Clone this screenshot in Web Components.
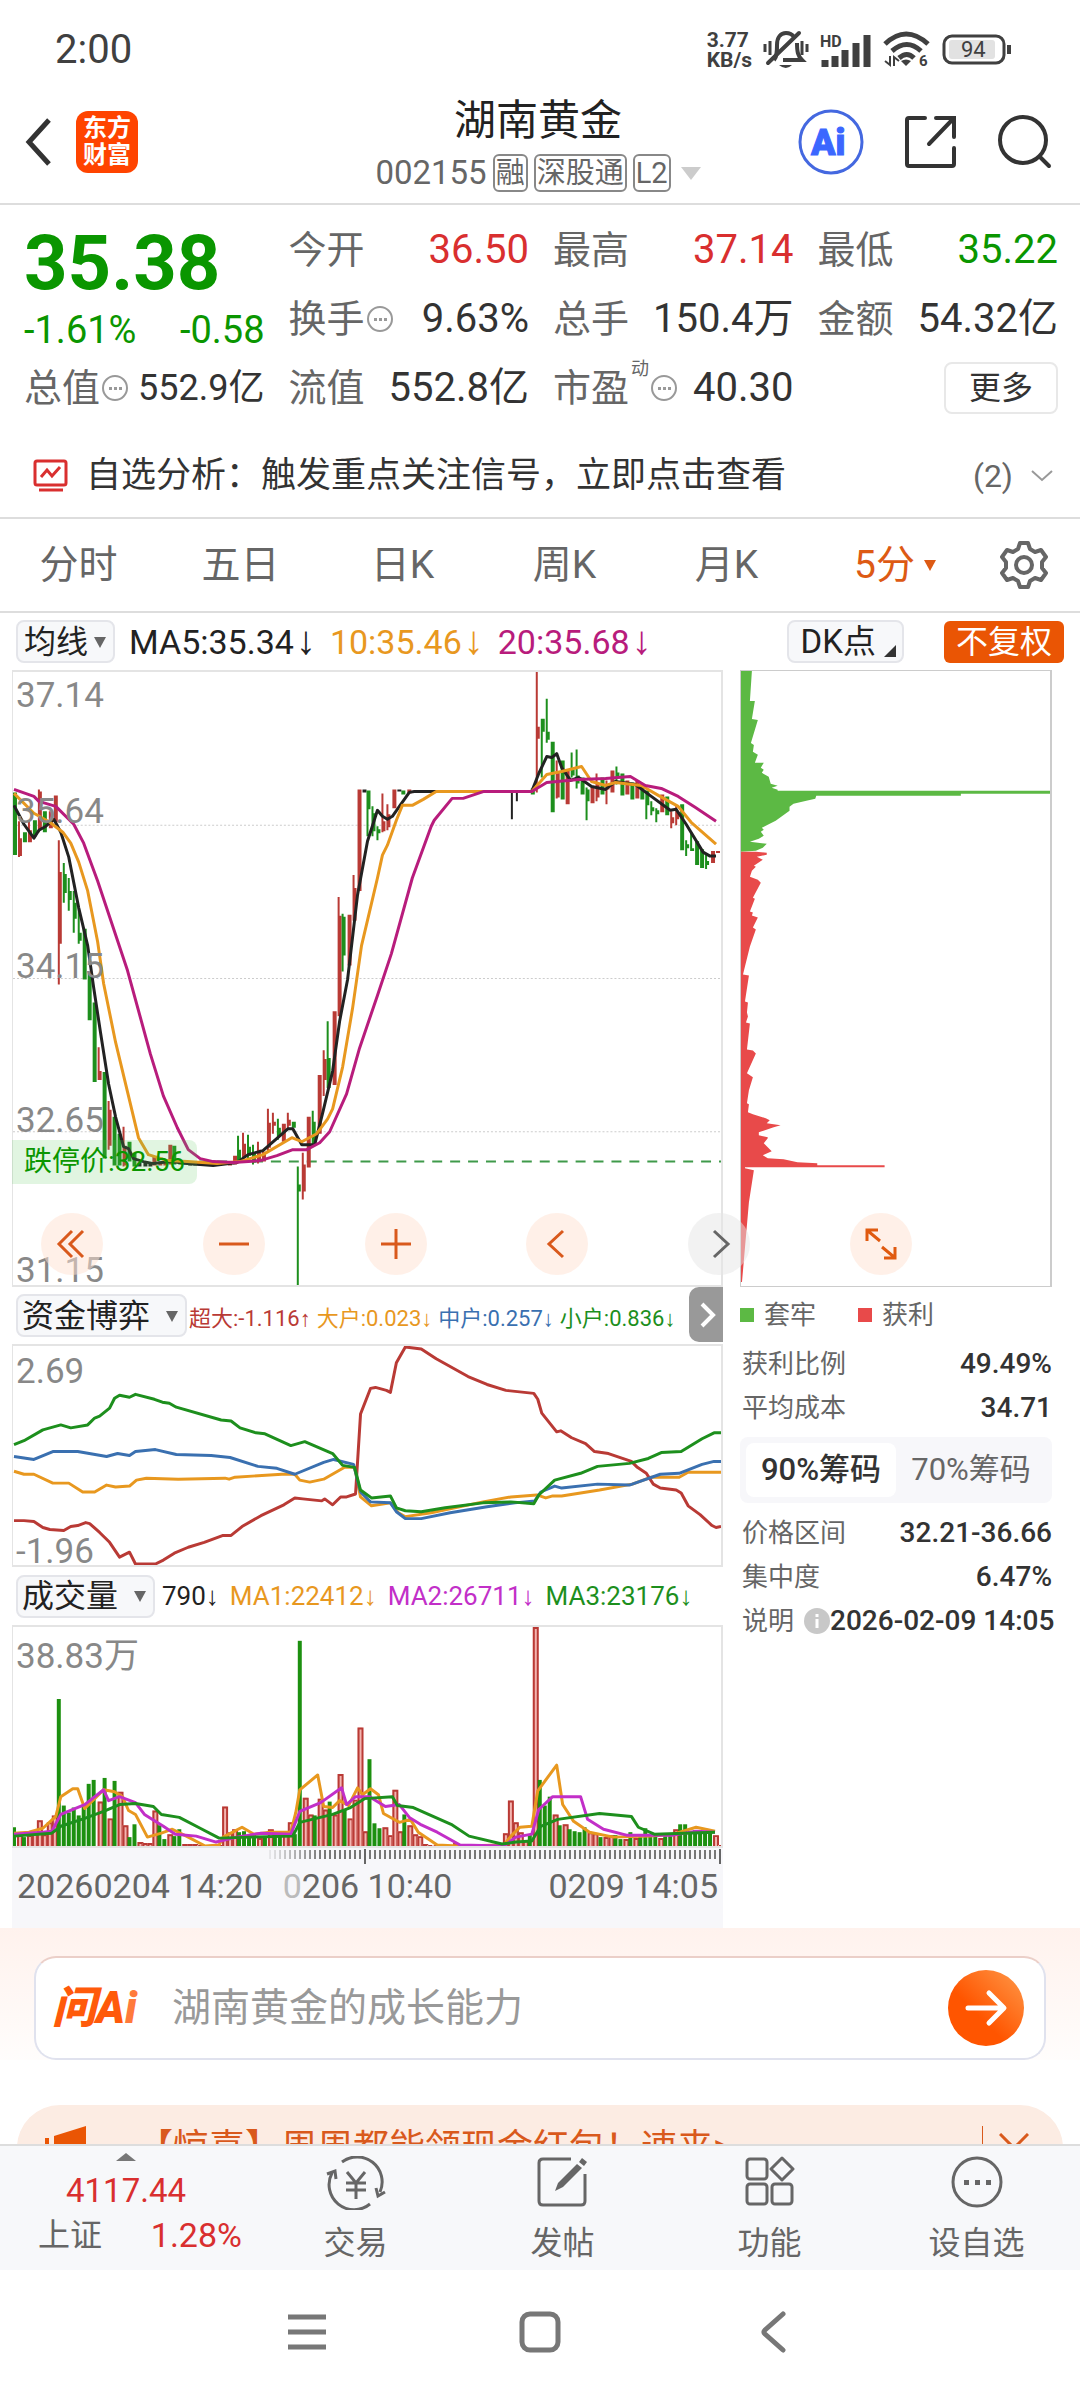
<!DOCTYPE html>
<html lang="zh-CN">
<head>
<meta charset="utf-8">
<meta name="viewport" content="width=device-width, initial-scale=1">
<title>湖南黄金 002155</title>
<style>
    body {
        margin: 0;
        background: #fff;
        color: #333;
        font-family: Roboto, "Noto Sans CJK SC", sans-serif;
    }
</style>
</head>
<body>
<stock-page></stock-page>

<script>
// shared rules, put at the top of every shadow root
const BASE = `
    * { box-sizing: border-box; }
    button, select, input { font: inherit; color: inherit; border: 0; padding: 0; margin: 0; background: none; border-radius: 0; }
    a { color: inherit; text-decoration: none; }
    svg { display: block; }
    .red { color: #d92f2f; }
    .green { color: #0a9600; }
`;

const ICONS = {
    back: [28, 50, '<path d="M25 3 5 25l20 22" stroke="#333" stroke-width="5"/>'],
    ai: [66, 66, '<circle cx="33" cy="33" r="31" stroke="#4468e0" stroke-width="3"/><text x="13" y="46" font-size="36" font-weight="900" fill="#3b67ff" stroke="#3b67ff">Ai</text>'],
    share: [54, 54, '<path d="M21 3H5q-2 0-2 2v44q0 2 2 2h43q2 0 2-2V33M32 3h18v19M49 4 25 29" stroke="#333" stroke-width="4" stroke-linecap="round"/>'],
    search: [54, 54, '<circle cx="25" cy="25" r="23" stroke="#333" stroke-width="4"/><path d="m42 42 9 9" stroke="#333" stroke-width="4" stroke-linecap="round"/>'],
    mute: [46, 40, '<path d="M11 30c3-3 3-8 3-15C14 7 18 3 23 3c3 0 6 1 8 4M34 13c0 9 1 13 5 17H20" stroke="#404040" stroke-width="4"/><path d="M5 33 36 3" stroke="#404040" stroke-width="4" stroke-linecap="round"/><path d="M16 35h13q-6 6-13 0z" fill="#404040"/><path d="M2 14v8m5-11v14m32-14v14m5-11v8" stroke="#404040" stroke-width="3"/>'],
    signal: [52, 38, '<text x="0" y="16" font-size="16" font-weight="700" fill="#404040">HD</text><path d="M5 36v-7m10 7V25m10 11V19m11 17V12m11 24V4" stroke="#404040" stroke-width="7"/>'],
    wifi: [48, 40, '<path d="M2 14q21-20 43 0M9 21q15-13 29 0M16 28q8-7 15 0" stroke="#404040" stroke-width="5"/><path d="m18 31 5 5 5-5q-5-3-10 0z" fill="#404040"/><path d="M7 26v9l-5-4m9 5v-9l5 4" stroke="#404040" stroke-width="2"/><text x="36" y="36" font-size="15" font-weight="700" fill="#404040">6</text>'],
    battery: [70, 32, '<rect x="2" y="2" width="60" height="27" rx="8" stroke="#404040" stroke-width="3"/><rect x="7" y="6" width="46" height="19" rx="3" fill="#e2e2e2"/><path d="M67 11v9" stroke="#404040" stroke-width="4"/><text x="19" y="23" font-size="22" fill="#404040">94</text>'],
    more: [26, 26, '<circle cx="13" cy="13" r="12" stroke="#999" stroke-width="2"/><path d="M7 12h3v3H7zm5 0h3v3h-3zm5 0h3v3h-3z" fill="#999"/>'],
    signalboard: [36, 34, '<rect x="2" y="2" width="31" height="24" rx="2" stroke="#d92f2f" stroke-width="3"/><path d="m8 18 6-7 5 6 8-9" stroke="#d92f2f" stroke-width="3"/><path d="M6 31h24" stroke="#d92f2f" stroke-width="3"/>'],
    chevron: [24, 14, '<path d="m2 2 10 9L22 2" stroke="#999" stroke-width="2"/>'],
    gear: [50, 50, '<path d="M21 3h8l2 6 5 3 6-2 5 7-4 5v6l4 5-5 7-6-2-5 3-2 6h-8l-2-6-5-3-6 2-5-7 4-5v-6l-4-5 5-7 6 2 5-3z" stroke="#666" stroke-width="4" stroke-linejoin="round"/><circle cx="25" cy="25" r="8" stroke="#666" stroke-width="4"/>'],
    first: [32, 32, '<path d="M16 3 3 16l13 13M27 3 14 16l13 13" stroke="#d9591c" stroke-width="3"/>'],
    minus: [32, 32, '<path d="M1 16h30" stroke="#d9591c" stroke-width="3"/>'],
    plus: [32, 32, '<path d="M1 16h30M16 1v30" stroke="#d9591c" stroke-width="3"/>'],
    prev: [32, 32, '<path d="M22 3 8 16l14 13" stroke="#d9591c" stroke-width="3"/>'],
    next: [32, 32, '<path d="m11 3 14 13-14 13" stroke="#666" stroke-width="3"/>'],
    expand: [32, 32, '<path d="M13 2H2v11M3 3l12 10M19 30h11V19M29 29 17 19" stroke="#e05a10" stroke-width="3"/>'],
    go: [76, 76, '<defs><linearGradient id="g" x1="0" y1="1" x2="1" y2="0"><stop offset=".4" stop-color="#ff5500"/><stop offset="1" stop-color="#ff9a4a"/></linearGradient></defs><circle cx="38" cy="38" r="38" fill="url(#g)"/><path d="M20 38h35M41 23l15 15-15 15" stroke="#fff" stroke-width="5" stroke-linecap="round" stroke-linejoin="round"/>'],
    horn: [42, 44, '<path d="M0 12h4v22H0zM9 10 41 0v44L9 34z" fill="#ea5504"/>'],
    close: [30, 30, '<path d="m1 1 28 28M29 1 1 29" stroke="#d9591c" stroke-width="3"/>'],
    trade: [60, 54, '<path d="M16 6A25 25 0 0 1 54 36M44 48A25 25 0 0 1 6 17M1 18l8-3 1 8M59 36l-7 4-2-8" stroke="#666" stroke-width="3"/><path d="m21 16 9 11 9-11M30 27v16M20 27h20M20 34h20" stroke="#666" stroke-width="3"/>'],
    post: [52, 52, '<path d="M34 3H6q-4 0-4 4v38q0 4 4 4h38q4 0 4-4V18" stroke="#666" stroke-width="3"/><path d="m18 35 3-8L40 8l5 4-19 19zM42 6l3-4 5 4-3 4z" fill="#666"/>'],
    grid: [50, 50, '<rect x="2" y="3" width="20" height="20" rx="3" stroke="#666" stroke-width="3"/><rect x="2" y="28" width="20" height="20" rx="3" stroke="#666" stroke-width="3"/><rect x="27" y="28" width="20" height="20" rx="3" stroke="#666" stroke-width="3"/><path d="m37 2 11 11-11 11-11-11z" stroke="#666" stroke-width="3" stroke-linejoin="round"/>'],
    dots: [52, 52, '<circle cx="26" cy="26" r="24" stroke="#666" stroke-width="3"/><path d="M13 24h5v5h-5zm11 0h5v5h-5zm11 0h5v5h-5z" fill="#666"/>'],
    menu: [40, 40, '<path d="M1 5h38M1 20h38M1 35h38" stroke="#777" stroke-width="5"/>'],
    home: [42, 42, '<rect x="3" y="3" width="36" height="36" rx="8" stroke="#777" stroke-width="5"/>'],
    sysback: [28, 42, '<path d="M24 3 6 19q-2 2 0 4l18 16" stroke="#777" stroke-width="5" stroke-linecap="round"/>'],
    info: [26, 26, '<circle cx="13" cy="13" r="13" fill="#c8c8c8"/><path d="M13 11v9M13 6v3" stroke="#fff" stroke-width="3"/>'],
    down: [14, 14, '<path d="M1 2h12L7 13z" fill="currentColor"/>'],
    up: [20, 8, '<path d="M10 0 0 8h20z" fill="#777"/>'],
    corner: [12, 12, '<path d="M12 0v12H0z" fill="#333"/>'],
    right: [18, 28, '<path d="m3 3 11 11L3 25" stroke="#fff" stroke-width="4"/>']
};

class StockIcon extends HTMLElement {
    constructor() {
        super();
        this.attachShadow({ mode: 'open' });
    }

    connectedCallback() {
        const [w, h, body] = ICONS[this.getAttribute('name')];
        this.shadowRoot.innerHTML = `
            <style>:host { display: block; flex: none; } svg { display: block; }</style>
            <svg width="${w}" height="${h}" viewBox="0 0 ${w} ${h}" fill="none" aria-hidden="true">${body}</svg>
        `;
    }
}

class StatusBar extends HTMLElement {
    constructor() {
        super();
        this.attachShadow({ mode: 'open' });
    }

    connectedCallback() {
        this.shadowRoot.innerHTML = `
            <style>
                ${BASE}
                :host { display: flex; align-items: center; height: 88px; padding: 12px 68px 0 55px; color: #404040; gap: 11px; }
                .time { font-size: 40px; line-height: 48px; margin-right: auto; }
                .speed { display: flex; flex-direction: column; font-size: 21px; line-height: 20px; font-weight: 700; }
            </style>
            <span class="time">2:00</span>
            <span class="speed"><span>3.77</span><span>KB/s</span></span>
            <stock-icon name="mute"></stock-icon>
            <stock-icon name="signal"></stock-icon>
            <stock-icon name="wifi"></stock-icon>
            <stock-icon name="battery"></stock-icon>
        `;
    }
}

class StockHeader extends HTMLElement {
    constructor() {
        super();
        this.attachShadow({ mode: 'open' });
    }

    connectedCallback() {
        this.shadowRoot.innerHTML = `
            <style>
                ${BASE}
                :host { display: grid; grid-template-columns: 1fr auto 1fr; align-items: center; height: 117px; padding: 0 28px 7px 24px; border-bottom: 2px solid #ddd; }
                .side { display: flex; align-items: center; gap: 24px; }
                .side.end { justify-content: flex-end; gap: 40px; }
                .logo { width: 62px; height: 62px; border-radius: 12px; background: #ff4400; color: #fff; font-size: 24px; line-height: 27px; font-weight: 700; text-align: center; padding-top: 4px; }
                h1 { margin: 4px 0 0; font-size: 42px; line-height: 50px; font-weight: 400; text-align: center; color: #222; }
                .sub { display: flex; align-items: center; justify-content: center; gap: 6px; margin-top: 8px; font-size: 33px; line-height: 38px; color: #666; }
                .tag { border: 2px solid #888; border-radius: 6px; font-size: 29px; line-height: 34px; padding: 0 1px; }
                .tri { margin-left: 4px; border: 10px solid transparent; border-top: 13px solid #ccc; border-bottom: 0; }
            </style>
            <div class="side">
                <button aria-label="返回"><stock-icon name="back"></stock-icon></button>
                <div class="logo">东方<br>财富</div>
            </div>
            <div>
                <h1>${this.getAttribute('name')}</h1>
                <div class="sub">${this.getAttribute('code')}
                    <span class="tag">融</span><span class="tag">深股通</span><span class="tag">L2</span><i class="tri"></i>
                </div>
            </div>
            <div class="side end">
                <button aria-label="智能助手"><stock-icon name="ai"></stock-icon></button>
                <button aria-label="分享"><stock-icon name="share"></stock-icon></button>
                <button aria-label="搜索"><stock-icon name="search"></stock-icon></button>
            </div>
        `;
    }
}

// one label and its value; attributes: label, value, tone, info, sup
class QuoteCell extends HTMLElement {
    constructor() {
        super();
        this.attachShadow({ mode: 'open' });
    }

    connectedCallback() {
        const sup = this.getAttribute('sup');
        this.shadowRoot.innerHTML = `
            <style>
                ${BASE}
                :host { display: flex; align-items: center; justify-content: space-between; white-space: nowrap; font-size: 40px; line-height: 48px; }
                .label { display: flex; align-items: center; gap: 2px; color: #666; font-size: 38px; }
                sup { align-self: flex-start; font-size: 18px; line-height: 18px; margin-top: -4px; }
                .tight { font-size: 36px; }
            </style>
            <span class="label">${this.getAttribute('label')}${sup ? `<sup>${sup}</sup>` : ''}${this.hasAttribute('info') ? '<stock-icon name="more"></stock-icon>' : ''}</span>
            <span class="${this.getAttribute('tone') || ''}">${this.getAttribute('value')}</span>
        `;
    }
}

class QuotePanel extends HTMLElement {
    constructor() {
        super();
        this.attachShadow({ mode: 'open' });
    }

    connectedCallback() {
        this.shadowRoot.innerHTML = `
            <style>
                ${BASE}
                :host { display: grid; grid-template-columns: repeat(4, minmax(0, 1fr)); grid-auto-rows: 69px; column-gap: 24px; padding: 10px 22px 0 24px; }
                .main { grid-row: span 2; padding-top: 8px; }
                .price { font-size: 76px; line-height: 80px; font-weight: 700; }
                .change { display: flex; justify-content: space-between; font-size: 38px; line-height: 54px; }
                .more { justify-self: end; align-self: center; width: 114px; height: 52px; border: 2px solid #e8e8e8; border-radius: 8px; font-size: 32px; line-height: 40px; }
            </style>
            <div class="main green">
                <div class="price">35.38</div>
                <div class="change"><span>-1.61%</span><span>-0.58</span></div>
            </div>
            <quote-cell label="今开" value="36.50" tone="red"></quote-cell>
            <quote-cell label="最高" value="37.14" tone="red"></quote-cell>
            <quote-cell label="最低" value="35.22" tone="green"></quote-cell>
            <quote-cell label="换手" value="9.63%" info></quote-cell>
            <quote-cell label="总手" value="150.4万"></quote-cell>
            <quote-cell label="金额" value="54.32亿"></quote-cell>
            <quote-cell label="总值" value="552.9亿" tone="tight" info></quote-cell>
            <quote-cell label="流值" value="552.8亿"></quote-cell>
            <quote-cell label="市盈" value="40.30" sup="动" info></quote-cell>
            <button class="more">更多</button>
        `;
    }
}

class NoticeBar extends HTMLElement {
    constructor() {
        super();
        this.attachShadow({ mode: 'open' });
    }

    connectedCallback() {
        this.shadowRoot.innerHTML = `
            <style>
                ${BASE}
                :host { display: block; border-bottom: 2px solid #ddd; }
                a { display: flex; align-items: center; height: 95px; padding: 12px 26px 0 33px; gap: 17px; font-size: 35px; line-height: 44px; }
                .count { margin-left: auto; font-size: 32px; color: #666; }
            </style>
            <a href="#signals">
                <stock-icon name="signalboard"></stock-icon>
                <slot></slot>
                <span class="count">(2)</span>
                <stock-icon name="chevron"></stock-icon>
            </a>
        `;
    }
}

class PeriodTabs extends HTMLElement {
    constructor() {
        super();
        this.attachShadow({ mode: 'open' });
    }

    connectedCallback() {
        const tabs = ['分时', '五日', '日K', '周K', '月K'];
        this.shadowRoot.innerHTML = `
            <style>
                ${BASE}
                :host { display: flex; align-items: center; height: 94px; border-bottom: 2px solid #ddd; font-size: 39px; line-height: 48px; color: #666; }
                button { flex: 0 0 15%; display: flex; align-items: center; justify-content: center; gap: 8px; padding-right: 5px; }
                .on { color: #dd5a14; padding-left: 14px; }
                .set { flex: 1; }
            </style>
            ${tabs.map(t => `<button>${t}</button>`).join('')}
            <button class="on">5分<stock-icon name="down"></stock-icon></button>
            <button class="set" aria-label="设置"><stock-icon name="gear"></stock-icon></button>
        `;
    }
}

// drop-down that picks the indicator of a chart
class IndicatorSelect extends HTMLElement {
    constructor() {
        super();
        this.attachShadow({ mode: 'open' });
    }

    connectedCallback() {
        const value = this.getAttribute('value');
        this.shadowRoot.innerHTML = `
            <style>
                ${BASE}
                :host { display: flex; flex: none; align-items: center; gap: 4px; height: 43px; padding: 0 6px; border: 2px solid #e4e5ea; border-radius: 8px; background: #f7f8fa; color: #666; font-size: 32px; }
                :host([wide]) { gap: 14px; padding: 0 6px 0 4px; }
                select { appearance: none; line-height: 38px; height: 38px; color: #222; }
            </style>
            <select aria-label="指标"><option>${value}</option></select>
            <stock-icon name="down"></stock-icon>
        `;
    }
}

class MaRow extends HTMLElement {
    constructor() {
        super();
        this.attachShadow({ mode: 'open' });
    }

    connectedCallback() {
        this.shadowRoot.innerHTML = `
            <style>
                ${BASE}
                :host { display: flex; align-items: center; height: 57px; padding: 0 16px; gap: 12px; font-size: 34px; line-height: 42px; color: #222; white-space: nowrap; }
                indicator-select { margin-right: 2px; }
                b { display: inline-block; width: 24px; text-align: center; font: 40px/40px "Liberation Sans", sans-serif; }
                .ma10 { color: #e8981f; }
                .ma20 { color: #b81c7c; }
                .dk { margin-left: auto; height: 43px; display: flex; align-items: center; gap: 8px; padding: 0 6px 0 12px; border: 2px solid #e4e5ea; border-radius: 8px; background: #f7f8fa; font-size: 33px; line-height: 38px; }
                .dk stock-icon { align-self: flex-end; padding-bottom: 4px; }
                .fq { height: 42px; margin-left: 28px; padding: 0 12px; border-radius: 6px; background: #ea5504; color: #fff; font-size: 32px; line-height: 40px; }
            </style>
            <indicator-select value="均线"></indicator-select>
            <span>MA5:35.34<b>↓</b></span>
            <span class="ma10">10:35.46<b>↓</b></span>
            <span class="ma20">20:35.68<b>↓</b></span>
            <button class="dk">DK点<stock-icon name="corner"></stock-icon></button>
            <button class="fq">不复权</button>
        `;
    }
}

const STEP = 5.03;
const RED = '#b93a35';
const GREEN = '#1d8f1d';

// x, high, low, r/g/k, and the body's top and bottom when a wick shows
const CANDLES = [
    [1,121,184,'g'],[6,150,186,'r',167,185],[11,161,171,'g'],[16,149,171,'r',159,171],[21,149,165,'g'],[26,118,161,'r',120,158],
    [31,140,161,'g'],[37,140,157,'r'],[42,124,151,'r'],[46,169,314,'r',201,273],[51,192,232,'g',203,222],[56,207,240,'g',220,229],
    [61,220,262,'g',232,248],[66,237,273,'g',262,270],[71,258,309,'g'],[76,303,350,'g'],[81,332,412,'g'],[86,377,410,'r',401,410],
    [91,402,489,'g'],[96,431,480,'r',440,476],[101,447,496,'g'],[106,464,496,'g'],[111,457,497,'r',476,496],[116,472,492,'g'],
    [121,483,497,'g'],[126,493,497,'k'],[132,493,497,'k'],[137,494,497,'k'],[141,487,496,'r'],[147,492,496,'r'],[152,492,496,'r'],
    [157,475,495,'r'],[161,476,495,'g'],[167,492,495,'g'],[172,492,495,'k'],[177,493,496,'k'],[182,493,496,'k'],[187,493,496,'k'],
    [217,492,496,'r'],[222,486,495,'r'],[226,466,492,'g',480,490],[231,463,490,'r',474,488],[236,465,489,'g',477,486],
    [241,475,495,'g',484,493],[246,472,494,'r',480,492],[251,482,492,'r'],[256,439,483,'r',453,478],[261,443,464,'r',452,456],
    [266,449,470,'g',458,466],[271,454,472,'r'],[276,443,460,'r',450,456],[281,452,458,'g'],[286,497,616,'g',515,522],
    [291,483,530,'r',495,522],[296,447,498,'r'],[301,441,477,'g',452,474],[307,405,464,'r'],[312,380,426,'r',389,410],
    [316,351,418,'g',388,418],[322,341,415,'r'],[327,226,346,'r',245,346],[331,243,301,'g',246,285],[337,244,295,'r'],
    [342,204,250,'r',217,250],[347,118,220,'r'],[352,118,121,'k'],[356,119,165,'g',119,138],[361,135,165,'g',142,160],
    [366,155,169,'g',158,162],[371,122,161,'r',150,160],[376,133,159,'r',143,156],[382,118,137,'r'],[387,118,120,'k'],[391,119,123,'g'],
    [397,118,122,'r'],[501,119,148,'k',119,121],[506,119,130,'k',119,121],[521,117,123,'g'],[526,0,121,'r',55,67],
    [531,47,106,'g',47,60],[536,27,71,'g',60,68],[541,70,141,'g'],[546,89,127,'r',100,126],[551,89,128,'g'],[556,98,133,'r'],
    [561,81,106,'g',98,104],[566,78,117,'g',104,112],[571,106,123,'g'],[576,116,149,'g',118,130],[581,116,132,'r'],[586,102,130,'r',112,126],
    [591,106,123,'g'],[596,109,133,'r',114,118],[601,99,121,'r'],[606,95,113,'g',101,106],[611,102,124,'g'],[616,109,123,'r'],
    [621,111,128,'g'],[626,109,127,'r'],[631,115,128,'g'],[636,119,148,'g',119,134],[641,130,144,'g',136,140],[646,137,151,'g',139,143],
    [651,123,141,'r'],[656,125,144,'g'],[661,140,157,'r',146,152],[666,134,154,'r',141,148],[671,133,179,'g'],[676,169,185,'g',173,177],
    [681,161,180,'g',177,180],[686,170,194,'g'],[691,178,197,'g'],[696,184,198,'g',190,194],[702,180,192,'r'],[707,180,182,'r']
];

// r/g and the height of each volume bar
const VOLUMES = ('g19 r14 g9 r11 r14 r26 r12 r24 r31 g149 g41 g34 g39 g31 g42 g63 g67 r45 g69 r28 g66 r55 r21 g9 g22 r4 r3 r3 r36 g21 ' +
    'g7 r12 g10 g17 r2 r2 r2 r1 r1 r1 r1 r1 r40 r14 r17 g14 g15 g11 g12 r8 g10 r17 g12 g13 r12 r24 g12 g208 r49 r32 ' +
    'g31 r48 r37 g45 r32 r73 g37 r28 r47 r120 r15 g88 g23 g18 r19 r11 r57 r15 g32 r21 r12 r10 r2 r1 r1 r1 r1 r1 r3 r1 ' +
    'r1 r1 r1 r1 r1 r1 r1 r1 r13 r46 r24 r14 r6 g12 r222 g67 g41 g50 r32 g21 r22 g17 g15 g14 g19 r14 r13 g9 r9 r11 ' +
    'g11 g7 r7 g14 r8 g12 g18 g12 g11 r8 g10 g10 r17 g22 g22 g15 g16 g14 g14 g15 r11 r1').split(' ');

const LINES = {
    price: [
        ['#222', '1,134 11,153 21,167 26,159 33,155 41,148 48,161 56,186 66,237 75,275 81,317 88,363 96,414 103,447 111,477 116,479 121,489 131,492 141,494 158,492 175,494 201,496 225,493 236,485 251,481 276,459 281,459 290,475 303,475 311,443 321,401 328,351 336,309 346,224 356,170 366,139 371,145 376,148 381,145 388,135 398,121 403,120 521,120 528,102 536,85 541,86 546,82 551,96 560,109 568,106 581,115 595,118 605,110 625,113 641,125 660,139 666,138 676,153 693,181 700,185 706,185'],
        ['#e8981f', '1,122 21,142 37,151 50,161 58,172 66,191 75,220 85,271 91,313 103,372 115,422 126,468 136,485 155,491 175,492 205,494 228,492 251,485 280,468 290,472 305,464 316,449 321,439 331,397 341,338 350,275 358,241 366,207 371,184 376,174 385,149 391,134 401,134 412,128 425,120 521,120 536,103 551,100 571,95 581,110 595,114 605,111 631,114 648,124 668,135 681,151 706,173'],
        ['#b81c7c', '1,118 21,125 26,130 43,135 61,153 71,172 85,210 115,300 138,384 151,426 165,458 176,480 188,489 201,492 221,493 248,491 265,486 281,480 295,480 308,473 318,462 335,424 348,378 366,325 380,283 401,207 420,155 423,149 441,127 452,127 473,120 521,120 536,111 568,108 595,107 620,105 635,114 651,117 668,125 685,136 706,150']
    ],
    flow: [
        ['#e8981f', '1,127 11,130 21,130 40,139 56,139 70,148 82,148 94,141 103,143 117,142 124,136 134,134 166,135 213,134 217,135 223,133 270,130 283,130 288,136 298,138 312,135 333,123 343,123 349,153 360,162 379,159 387,169 394,173 420,169 472,158 500,153 526,151 535,154 542,152 551,152 589,146 622,140 641,133 669,133 678,128 711,128'],
        ['#b93a35', '1,177 11,177 21,178 30,184 37,186 51,187 58,183 65,182 73,179 77,180 87,189 97,199 107,214 117,209 123,221 143,221 151,217 162,210 176,204 192,199 211,192 219,192 230,183 249,172 272,161 283,154 291,155 310,157 313,155 321,161 329,153 335,153 344,150 349,69 359,43 364,42 375,45 379,47 385,17 394,1 410,3 425,13 457,31 476,39 495,45 523,48 527,54 531,68 546,87 550,86 561,93 575,99 584,107 598,109 621,117 627,123 636,129 643,140 650,144 666,146 671,149 678,162 690,171 702,182 706,184 711,183'],
        ['#3a70b0', '1,112 21,115 40,107 65,107 94,112 105,109 117,111 123,107 143,105 164,110 199,111 218,113 246,122 265,124 283,130 312,118 322,115 342,120 349,148 359,158 379,159 385,168 394,175 410,175 439,169 476,163 504,159 524,157 530,148 544,142 551,144 587,140 619,141 650,130 669,129 692,120 704,117 711,117'],
        ['#1d8f1d', '1,100 11,96 30,85 48,80 58,83 75,80 82,73 87,71 97,63 102,53 107,50 117,52 123,49 142,54 150,57 157,58 164,62 209,75 219,76 228,83 244,88 253,89 279,101 293,97 307,103 321,109 331,121 343,123 349,146 360,154 379,152 385,164 394,167 410,168 434,164 472,159 500,158 523,160 528,151 544,136 570,129 587,122 619,119 638,114 651,108 671,107 692,94 704,88 711,88']
    ],
    volume: [
        ['#e8981f', '1,209 16,208 30,204 43,192 48,172 60,164 65,164 72,184 83,173 91,165 102,167 110,172 116,186 123,190 135,213 149,209 160,205 174,212 193,222 207,221 211,213 230,203 242,210 258,208 279,208 284,188 288,165 306,150 312,182 321,183 328,176 337,181 346,163 351,170 359,164 367,170 372,189 388,198 399,195 407,208 426,221 447,222 493,221 500,212 509,203 521,202 527,166 546,140 552,180 563,197 579,208 603,213 640,212 663,210 686,203 705,207'],
        ['#c22fc8', '1,210 30,208 39,207 48,190 72,180 91,165 96,176 107,172 123,178 132,190 151,202 163,210 184,212 204,218 225,213 249,209 279,210 288,187 309,178 330,163 335,180 344,172 358,172 374,182 388,180 398,193 409,200 426,208 449,221 493,222 505,213 521,210 528,185 542,172 570,172 577,195 593,205 616,211 663,211 686,207 705,208'],
        ['#1d8f1d', '1,212 39,209 48,202 72,194 91,187 107,180 123,179 141,182 149,190 167,193 188,204 207,214 239,213 281,212 288,198 321,190 339,183 353,174 381,172 386,181 402,183 440,200 458,212 491,220 505,218 521,217 530,202 547,195 589,189 621,192 628,203 644,210 705,208']
    ]
};

const polylines = (list) => list.map(([color, points]) =>
    `<polyline points="${points}" fill="none" stroke="${color}" stroke-width="3" stroke-linejoin="round"/>`).join('');

const candle = ([x, high, low, c, top = high, bottom = low]) => {
    const fill = c === 'r' ? RED : c === 'g' ? GREEN : '#222';
    return `<path fill="${fill}" d="M${x - 1} ${high}h2V${low}h-2zM${x - 1} ${top}h4V${bottom}h-4z"/>`;
};

const volumeBar = (v, i) => {
    const x = Math.round(i * STEP) - 1;
    const h = Number(v.slice(1));
    return v[0] === 'g'
        ? `<rect x="${x}" y="${222 - h}" width="4" height="${h}" fill="#1d9010"/>`
        : `<rect x="${x}" y="${222 - h}" width="5" height="${h}" fill="#f3b5b0"/><path d="M${x + 1} 222V${223 - h}h4V222" fill="none" stroke="${RED}" stroke-width="2"/>`;
};

// framed plot; attribute type picks the drawing, slotted text lies on top
class StockChart extends HTMLElement {
    constructor() {
        super();
        this.attachShadow({ mode: 'open' });
    }

    connectedCallback() {
        const type = this.getAttribute('type');
        const height = type === 'price' ? 616 : 222;
        let body = '';
        if (type === 'price') {
            body = `<path d="M0 154h711M0 308h711M0 462h711" stroke="#ccc" stroke-dasharray="2 2"/>
                <path d="M187 492h524" stroke="#3f9a4a" stroke-width="2" stroke-dasharray="10 8"/>
                ${CANDLES.map(candle).join('')}`;
        }
        if (type === 'volume') {
            body = VOLUMES.map(volumeBar).join('');
        }
        this.shadowRoot.innerHTML = `
            <style>
                ${BASE}
                :host { display: block; position: relative; height: ${height + 1}px; color: #888; font-size: 35px; line-height: 40px; }
                svg { width: 100%; height: 100%; border: 2px solid #e4e4e4; border-width: 2px 2px 2px 1px; }
            </style>
            <svg viewBox="0 0 711 ${height}" preserveAspectRatio="none" role="img" aria-label="${this.getAttribute('label')}">${body}${polylines(LINES[type])}</svg>
            <slot></slot>
        `;
    }
}

class ChipChart extends HTMLElement {
    constructor() {
        super();
        this.attachShadow({ mode: 'open' });
    }

    connectedCallback() {
        this.shadowRoot.innerHTML = `
            <style>
                ${BASE}
                :host { display: block; height: 617px; }
                svg { width: 100%; height: 100%; border: 1px solid #ccc; border-right-width: 2px; }
            </style>
            <svg viewBox="0 0 312 616" preserveAspectRatio="none" role="img" aria-label="筹码分布">
                <polygon fill="#5cb944" points="0,0 11,0 9,30 14,30 11,48 17,49 10,72 13,74 12,81 17,84 14,92 23,92 20,97 23,99 21,102 28,106 30,113 37,115 31,117 37,119 37,120 312,120 312,123 222,123 222,125 76,125 75,128 66,130 53,133 49,136 49,140 42,145 35,150 27,154 21,157 23,159 20,161 23,165 18,168 9,171 26,173 22,177 15,180 0,181"/>
                <polygon fill="#e84a4a" points="0,181 15,181 26,182 26,184 16,186 22,189 13,195 15,196 11,200 9,206 17,209 20,212 12,227 14,228 9,241 12,242 11,245 17,247 12,257 15,259 9,276 2,304 8,305 4,331 7,332 6,342 7,346 5,352 9,353 6,379 12,380 15,383 6,403 12,407 8,420 6,433 8,434 7,442 12,444 25,448 29,450 26,453 40,455 33,457 18,462 18,465 27,467 27,468 23,473 27,477 31,481 22,485 27,488 43,489 57,492 77,493 77,495 145,495 145,497 4,497 4,498 13,500 8,532 1,612 0,612"/>
            </svg>
        `;
    }
}

class ChipPanel extends HTMLElement {
    constructor() {
        super();
        this.attachShadow({ mode: 'open' });
    }

    connectedCallback() {
        this.shadowRoot.innerHTML = `
            <style>
                ${BASE}
                :host { display: block; min-width: 0; font-size: 26px; line-height: 44px; color: #666; }
                .legend { display: flex; gap: 42px; height: 55px; align-items: center; }
                .legend span { display: flex; align-items: center; gap: 10px; }
                i { width: 14px; height: 14px; background: #5cb944; }
                i.win { background: #e84a4a; }
                dl { margin: 0; }
                dl div { display: flex; justify-content: space-between; padding-left: 2px; white-space: nowrap; }
                dt { display: flex; align-items: center; gap: 10px; }
                dd { margin: 0; font-size: 28px; font-weight: 500; color: #333; }
                .switch { display: grid; grid-template-columns: 1fr 1fr; height: 66px; margin: 7px 0 8px; padding: 6px; border-radius: 8px; background: #f7f7fa; font-size: 31px; }
                .on { background: #fff; border-radius: 8px; color: #333; font-weight: 500; }
            </style>
            <chip-chart></chip-chart>
            <div class="legend"><span><i></i>套牢</span><span><i class="win"></i>获利</span></div>
            <dl>
                <div><dt>获利比例</dt><dd>49.49%</dd></div>
                <div><dt>平均成本</dt><dd>34.71</dd></div>
            </dl>
            <div class="switch"><button class="on">90%筹码</button><button>70%筹码</button></div>
            <dl>
                <div><dt>价格区间</dt><dd>32.21-36.66</dd></div>
                <div><dt>集中度</dt><dd>6.47%</dd></div>
                <div><dt>说明<stock-icon name="info"></stock-icon></dt><dd>2026-02-09 14:05</dd></div>
            </dl>
        `;
    }
}

class TimeAxis extends HTMLElement {
    constructor() {
        super();
        this.attachShadow({ mode: 'open' });
    }

    connectedCallback() {
        let ticks = '';
        for (let x = 258; x < 708; x += 5) {
            ticks += `M${x} 2v9`;
        }
        this.shadowRoot.innerHTML = `
            <style>
                ${BASE}
                :host { display: block; height: 80px; background: #f7f7fa; color: #666; font-size: 34px; line-height: 42px; }
                svg { width: 100%; height: 16px; }
                .times { display: grid; grid-template-columns: 1fr auto 1fr; padding: 1px 5px 0; gap: 16px; white-space: nowrap; }
                .times span:last-child { text-align: right; }
                em { font-style: normal; color: #bbb; }
            </style>
            <svg viewBox="0 0 711 16" preserveAspectRatio="none" aria-hidden="true">
                <defs><linearGradient id="fade" gradientUnits="userSpaceOnUse" x1="250" y1="0" x2="310" y2="0"><stop stop-color="#777" stop-opacity="0"/><stop offset="1" stop-color="#777"/></linearGradient></defs>
                <path d="${ticks}" stroke="url(#fade)" stroke-width="2"/>
                <path d="M353 1v15M708 1v15" stroke="#666" stroke-width="2"/>
            </svg>
            <div class="times"><span>20260204 14:20</span><span><em>0</em>206 10:40</span><span>0209 14:05</span></div>
        `;
    }
}

class ChartBoard extends HTMLElement {
    constructor() {
        super();
        this.attachShadow({ mode: 'open' });
    }

    connectedCallback() {
        this.shadowRoot.innerHTML = `
            <style>
                ${BASE}
                :host { display: grid; position: relative; grid-template-columns: minmax(0, 711fr) minmax(0, 312fr); column-gap: 17px; padding: 0 28px 0 12px; }
                .left { min-width: 0; }
                .scale { position: absolute; left: 4px; }
                .limit { position: absolute; left: 0; top: 470px; height: 44px; padding: 0 12px; border-radius: 0 8px 8px 0; background: rgba(90, 200, 90, .18); color: #0a9600; font-size: 28px; line-height: 44px; }
                .bar { display: flex; align-items: center; height: 58px; padding-left: 4px; gap: 11px; white-space: nowrap; font-family: Roboto, "Liberation Sans", "Noto Sans CJK SC", sans-serif; font-size: 26px; }
                .bar.flow { font-size: 22px; height: 57px; gap: 6px; }
                .bar indicator-select { margin-right: -4px; }
                .page { margin-left: auto; align-self: stretch; width: 34px; margin-bottom: 2px; padding-left: 10px; border-radius: 10px 0 0 10px; background: #999; }
                .tools { position: absolute; left: 41px; right: 168px; top: 543px; display: flex; justify-content: space-between; }
                .tools button { width: 62px; height: 62px; display: grid; place-items: center; border-radius: 50%; background: rgba(255, 225, 210, .5); }
                .tools .off { background: rgba(230, 230, 230, .5); }
            </style>
            <div class="left">
                <stock-chart type="price" label="五分钟K线">
                    <span class="scale" style="top: 6px">37.14</span>
                    <span class="scale" style="top: 122px">35.64</span>
                    <span class="scale" style="top: 277px">34.15</span>
                    <span class="scale" style="top: 431px">32.65</span>
                    <span class="scale" style="top: 581px">31.15</span>
                    <span class="limit">跌停价:32.56</span>
                </stock-chart>
                <div class="bar flow">
                    <indicator-select wide value="资金博弈"></indicator-select>
                    <span style="color: #b93a35">超大:-1.116↑</span>
                    <span style="color: #e8981f">大户:0.023↓</span>
                    <span style="color: #3a70b0">中户:0.257↓</span>
                    <span style="color: #1d8f1d">小户:0.836↓</span>
                    <button class="page" aria-label="更多指标"><stock-icon name="right"></stock-icon></button>
                </div>
                <stock-chart type="flow" label="资金博弈">
                    <span class="scale" style="top: 8px">2.69</span>
                    <span class="scale" style="top: 188px">-1.96</span>
                </stock-chart>
                <div class="bar">
                    <indicator-select wide value="成交量"></indicator-select>
                    <span style="color: #222">790↓</span>
                    <span style="color: #e8981f">MA1:22412↓</span>
                    <span style="color: #c22fc8">MA2:26711↓</span>
                    <span style="color: #1d8f1d">MA3:23176↓</span>
                </div>
                <stock-chart type="volume" label="成交量">
                    <span class="scale" style="top: 12px">38.83万</span>
                </stock-chart>
                <time-axis></time-axis>
            </div>
            <chip-panel></chip-panel>
            <div class="tools">
                <button aria-label="最左"><stock-icon name="first"></stock-icon></button>
                <button aria-label="缩小"><stock-icon name="minus"></stock-icon></button>
                <button aria-label="放大"><stock-icon name="plus"></stock-icon></button>
                <button aria-label="左移"><stock-icon name="prev"></stock-icon></button>
                <button class="off" aria-label="右移"><stock-icon name="next"></stock-icon></button>
                <button aria-label="全屏"><stock-icon name="expand"></stock-icon></button>
            </div>
        `;
    }
}

class AskAi extends HTMLElement {
    constructor() {
        super();
        this.attachShadow({ mode: 'open' });
    }

    connectedCallback() {
        this.shadowRoot.innerHTML = `
            <style>
                ${BASE}
                :host { display: block; padding: 28px 34px 0; background: linear-gradient(#fff2ed, #fff 160px); }
                form { display: flex; align-items: center; height: 104px; padding: 0 20px 0 16px; border: 2px solid #e0e2ee; border-top-color: #ebcfc8; border-radius: 22px; background: #fff; }
                .logo { width: 120px; font-size: 44px; line-height: 52px; font-weight: 900; font-style: italic; color: #ff5a0a; }
                .logo span { color: #ff7a3c; }
                input { flex: 1; min-width: 0; height: 60px; font-size: 39px; outline: 0; }
                input::placeholder { color: #999; opacity: 1; }
            </style>
            <form>
                <label class="logo" for="ask">问A<span>i</span></label>
                <input id="ask" placeholder="湖南黄金的成长能力">
                <button type="button" aria-label="发送"><stock-icon name="go"></stock-icon></button>
            </form>
        `;
    }
}

class PromoBanner extends HTMLElement {
    constructor() {
        super();
        this.attachShadow({ mode: 'open' });
    }

    connectedCallback() {
        this.shadowRoot.innerHTML = `
            <style>
                ${BASE}
                :host { display: flex; align-items: center; height: 86px; margin: 45px 17px 0; padding: 0 34px 0 28px; border-radius: 43px; background: #fcece3; color: #d9591c; font-size: 36px; line-height: 44px; }
                a { margin-left: 50px; white-space: nowrap; }
                hr { width: 1px; height: 44px; border: 0; background: #d9591c; margin: 0 16px 0 auto; }
            </style>
            <stock-icon name="horn"></stock-icon>
            <a href="#promo"><slot></slot></a>
            <hr>
            <button aria-label="关闭"><stock-icon name="close"></stock-icon></button>
        `;
    }
}

class BottomNav extends HTMLElement {
    constructor() {
        super();
        this.attachShadow({ mode: 'open' });
    }

    connectedCallback() {
        const items = [['trade', '交易'], ['post', '发帖'], ['grid', '功能'], ['dots', '设自选']];
        this.shadowRoot.innerHTML = `
            <style>
                ${BASE}
                :host { display: grid; grid-template-columns: 252fr repeat(4, 207fr); height: 126px; border-top: 2px solid #ddd; background: #f7f8fa; color: #666; font-size: 32px; line-height: 44px; }
                .index { display: flex; flex-direction: column; align-items: center; padding-top: 7px; text-align: center; }
                .value { font-size: 33px; line-height: 44px; margin-top: 8px; }
                .row { display: flex; align-self: stretch; justify-content: space-between; padding: 0 10px 0 38px; }
                .row .red { font-size: 34px; }
                .item { display: flex; flex-direction: column; align-items: center; padding-top: 10px; gap: 11px; }
                .item stock-icon { height: 54px; }
            </style>
            <a class="index" href="#index">
                <stock-icon name="up"></stock-icon>
                <span class="value red">4117.44</span>
                <span class="row"><span>上证</span><span class="red">1.28%</span></span>
            </a>
            ${items.map(([icon, text]) => `<a class="item" href="#${icon}"><stock-icon name="${icon}"></stock-icon>${text}</a>`).join('')}
        `;
    }
}

class SystemNav extends HTMLElement {
    constructor() {
        super();
        this.attachShadow({ mode: 'open' });
    }

    connectedCallback() {
        this.shadowRoot.innerHTML = `
            <style>
                ${BASE}
                :host { display: grid; grid-template-columns: repeat(3, 21.6%); justify-content: center; height: 130px; padding-bottom: 6px; background: #fff; }
                button { display: grid; place-items: center; }
            </style>
            <button aria-label="任务"><stock-icon name="menu"></stock-icon></button>
            <button aria-label="主屏幕"><stock-icon name="home"></stock-icon></button>
            <button aria-label="返回"><stock-icon name="sysback"></stock-icon></button>
        `;
    }
}

class StockPage extends HTMLElement {
    constructor() {
        super();
        this.attachShadow({ mode: 'open' });
    }

    connectedCallback() {
        this.shadowRoot.innerHTML = `
            <style>
                ${BASE}
                :host { display: flex; flex-direction: column; height: 100vh; }
                main { flex: 1; min-height: 0; overflow: hidden; }
            </style>
            <main>
                <status-bar></status-bar>
                <stock-header name="湖南黄金" code="002155"></stock-header>
                <quote-panel></quote-panel>
                <notice-bar>自选分析：触发重点关注信号，立即点击查看</notice-bar>
                <period-tabs></period-tabs>
                <ma-row></ma-row>
                <chart-board></chart-board>
                <ask-ai></ask-ai>
                <promo-banner>【惊喜】周周都能领现金红包！速来&gt;</promo-banner>
            </main>
            <bottom-nav></bottom-nav>
            <system-nav></system-nav>
        `;
    }
}

customElements.define('stock-icon', StockIcon);
customElements.define('status-bar', StatusBar);
customElements.define('stock-header', StockHeader);
customElements.define('quote-cell', QuoteCell);
customElements.define('quote-panel', QuotePanel);
customElements.define('notice-bar', NoticeBar);
customElements.define('period-tabs', PeriodTabs);
customElements.define('indicator-select', IndicatorSelect);
customElements.define('ma-row', MaRow);
customElements.define('stock-chart', StockChart);
customElements.define('chip-chart', ChipChart);
customElements.define('chip-panel', ChipPanel);
customElements.define('time-axis', TimeAxis);
customElements.define('chart-board', ChartBoard);
customElements.define('ask-ai', AskAi);
customElements.define('promo-banner', PromoBanner);
customElements.define('bottom-nav', BottomNav);
customElements.define('system-nav', SystemNav);
customElements.define('stock-page', StockPage);
</script>
</body>
</html>
